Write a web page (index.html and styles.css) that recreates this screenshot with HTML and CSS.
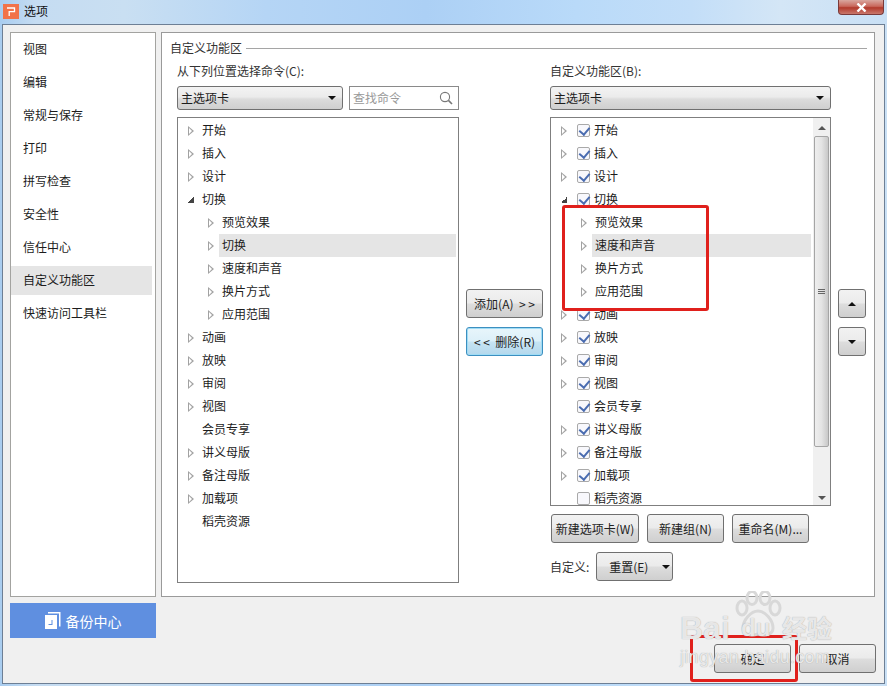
FILE: index.html
```html
<!DOCTYPE html>
<html lang="zh-CN">
<head>
<meta charset="utf-8">
<title>选项</title>
<link rel="stylesheet" href="styles.css">
</head>
<body>
<div class="window">
  <header class="titlebar">
    <svg class="app-icon" width="16" height="15" viewBox="0 0 16 15"><rect width="16" height="15" fill="#f2734a"/><path d="M4 4h7.5v3.6H6.2V12" fill="none" stroke="#fff" stroke-width="1.3"/></svg>
    <span class="title">选项</span>
    <span class="close"><svg width="11" height="9" viewBox="0 0 11 9"><path d="M1.5 0.5l8 8M9.5 0.5l-8 8" stroke="#fff" stroke-width="2.4"/></svg></span>
  </header>
  <div class="dialog">
    <nav class="sidebar">
      <div class="nav-item">视图</div>
      <div class="nav-item">编辑</div>
      <div class="nav-item">常规与保存</div>
      <div class="nav-item">打印</div>
      <div class="nav-item">拼写检查</div>
      <div class="nav-item">安全性</div>
      <div class="nav-item">信任中心</div>
      <div class="nav-item active">自定义功能区</div>
      <div class="nav-item">快速访问工具栏</div>
    </nav>
    <main class="panel">
      <div class="legend"><span>自定义功能区</span><i class="legend-line"></i></div>
      <div class="columns">
        <section class="col">
          <label class="col-label">从下列位置选择命令(C):</label>
          <div class="select-row">
            <div class="select grow"><span>主选项卡</span><i class="caret"></i></div>
            <div class="search"><span>查找命令</span>
              <svg width="14" height="14" viewBox="0 0 14 14"><circle cx="6" cy="6" r="4.6" fill="none" stroke="#777" stroke-width="1.1"/><path d="M9.4 9.4l3.6 3.6" stroke="#777" stroke-width="1.6"/></svg>
            </div>
          </div>
          <div class="tree tree-left">
            <div class="row"><i class="tri"></i><span>开始</span></div>
            <div class="row"><i class="tri"></i><span>插入</span></div>
            <div class="row"><i class="tri"></i><span>设计</span></div>
            <div class="row"><i class="tri open"></i><span>切换</span></div>
            <div class="row child"><i class="tri"></i><span>预览效果</span></div>
            <div class="row child selected"><i class="tri"></i><span>切换</span></div>
            <div class="row child"><i class="tri"></i><span>速度和声音</span></div>
            <div class="row child"><i class="tri"></i><span>换片方式</span></div>
            <div class="row child"><i class="tri"></i><span>应用范围</span></div>
            <div class="row"><i class="tri"></i><span>动画</span></div>
            <div class="row"><i class="tri"></i><span>放映</span></div>
            <div class="row"><i class="tri"></i><span>审阅</span></div>
            <div class="row"><i class="tri"></i><span>视图</span></div>
            <div class="row"><i class="tri none"></i><span>会员专享</span></div>
            <div class="row"><i class="tri"></i><span>讲义母版</span></div>
            <div class="row"><i class="tri"></i><span>备注母版</span></div>
            <div class="row"><i class="tri"></i><span>加载项</span></div>
            <div class="row"><i class="tri none"></i><span>稻壳资源</span></div>
          </div>
        </section>
        <section class="col-mid">
          <button class="btn">添加(A)&nbsp; &gt; &gt;</button>
          <button class="btn focus">&lt; &lt;&nbsp; 删除(R)</button>
        </section>
        <section class="col">
          <label class="col-label">自定义功能区(B):</label>
          <div class="select-row">
            <div class="select grow"><span>主选项卡</span><i class="caret"></i></div>
          </div>
          <div class="tree tree-right">
            <div class="tree-list">
              <div class="row"><i class="tri"></i><i class="chk on"></i><span>开始</span></div>
              <div class="row"><i class="tri"></i><i class="chk on"></i><span>插入</span></div>
              <div class="row"><i class="tri"></i><i class="chk on"></i><span>设计</span></div>
              <div class="row"><i class="tri open"></i><i class="chk on"></i><span>切换</span></div>
              <div class="row child"><i class="tri"></i><span>预览效果</span></div>
              <div class="row child selected"><i class="tri"></i><span>速度和声音</span></div>
              <div class="row child"><i class="tri"></i><span>换片方式</span></div>
              <div class="row child"><i class="tri"></i><span>应用范围</span></div>
              <div class="row"><i class="tri"></i><i class="chk on"></i><span>动画</span></div>
              <div class="row"><i class="tri"></i><i class="chk on"></i><span>放映</span></div>
              <div class="row"><i class="tri"></i><i class="chk on"></i><span>审阅</span></div>
              <div class="row"><i class="tri"></i><i class="chk on"></i><span>视图</span></div>
              <div class="row"><i class="tri none"></i><i class="chk on"></i><span>会员专享</span></div>
              <div class="row"><i class="tri"></i><i class="chk on"></i><span>讲义母版</span></div>
              <div class="row"><i class="tri"></i><i class="chk on"></i><span>备注母版</span></div>
              <div class="row"><i class="tri"></i><i class="chk on"></i><span>加载项</span></div>
              <div class="row"><i class="tri none"></i><i class="chk"></i><span>稻壳资源</span></div>
            </div>
            <div class="scrollbar">
              <i class="sb-arrow up"></i>
              <div class="sb-thumb"><b></b><b></b><b></b></div>
              <i class="sb-arrow down"></i>
            </div>
          </div>
          <div class="btn-row">
            <button class="btn wide">新建选项卡(W)</button>
            <button class="btn">新建组(N)</button>
            <button class="btn">重命名(M)...</button>
          </div>
          <div class="reset-row">
            <span class="reset-label">自定义:</span>
            <button class="btn split"><span>重置(E)</span><i class="caret"></i></button>
          </div>
        </section>
        <section class="col-move">
          <button class="btn square"><i class="caret up"></i></button>
          <button class="btn square"><i class="caret"></i></button>
        </section>
      </div>
    </main>
    <div class="backup">
      <svg width="16" height="17" viewBox="0 0 16 17"><path d="M3 0h12.5v14.5H14V1.5H3z" fill="#fff"/><path d="M0 3h12v14H0z" fill="#fff"/><path d="M7.5 8v5H3.5v-1h3V8z" fill="#5f8fe0"/></svg>
      <span>备份中心</span>
    </div>
    <footer class="footer">
      <button class="btn">确定</button>
      <button class="btn">取消</button>
    </footer>
  </div>

  <div class="mark mark-tree"></div>
  <div class="mark mark-ok"></div>

  <div class="watermark">
    <svg class="paw" width="50" height="46" viewBox="0 0 50 46"><g fill="none" stroke="#d8d8d8" stroke-width="3"><ellipse cx="9" cy="17" rx="5" ry="7"/><ellipse cx="19" cy="7" rx="5" ry="6.5"/><ellipse cx="32" cy="7" rx="5" ry="6.5"/><ellipse cx="42" cy="17" rx="5" ry="7"/><path d="M25 20c-7 0-15 9-15 17 0 7 8 8 15 6 7 2 15 1 15-6 0-8-8-17-15-17z"/></g></svg>
    <span class="wm-bai">Bai</span>
    <span class="wm-du">du</span>
    <span class="wm-jy">经验</span>
    <span class="wm-url">jingyan.baidu.com</span>
  </div>
</div>
</body>
</html>
```

FILE: styles.css
```css
* { box-sizing: border-box; }
html, body { margin: 0; padding: 0; }
body {
  width: 887px; height: 686px; overflow: hidden;
  font: 12px/14px "Noto Sans CJK SC", "Liberation Sans", sans-serif;
  color: #1c1c1c;
}
i { display: block; flex: none; }

.window {
  position: relative;
  width: 887px; height: 686px;
  display: flex; flex-direction: column;
  background: linear-gradient(90deg, #a9cdf0 0, #c5dcf2 4%, #c9dff2 14%, #b5d5f5 30%, #acd0f5 48%, #b9daf9 65%, #c3def8 78%, #d4e6f6 88%, #c9e0f5 100%);
}
.titlebar {
  height: 24px; flex: none;
  display: flex; align-items: center;
  padding: 0 3px 2px 3px;
  position: relative;
}
.app-icon { margin-top: 1px; }
.title { margin-left: 5px; color: #111; }
.close {
  position: absolute; right: 3px; top: 0;
  width: 46px; height: 15px;
  display: flex; align-items: center; justify-content: center;
  border: 1px solid #7a3a3a; border-top: 0;
  border-radius: 0 0 4px 4px;
  background: linear-gradient(#d9a79f 0, #c9685c 45%, #b23a2c 55%, #c9786c 100%);
}

.dialog {
  flex: none;
  width: 883px; height: 660px;
  margin-left: 2px;
  border: 1px solid #6d7f95;
  background: #f0f0f0;
  display: grid;
  grid-template-columns: 146px 714px;
  grid-template-rows: 565px 35px 29px;
  column-gap: 5px; row-gap: 6px;
  padding: 7px 8px 0 7px;
  align-content: start;
}

.sidebar {
  grid-row: 1; grid-column: 1;
  background: #fff;
  border: 1px solid #a3a3a0;
  padding-top: 2px;
}
.nav-item {
  height: 29px; margin: 0 3px 4px 0;
  padding-left: 12px;
  line-height: 27px;
}
.nav-item.active { background: #e5e5e5; }

.panel {
  grid-row: 1; grid-column: 2;
  background: #fff;
  border: 1px solid #9a9a9a;
  padding: 8px 7px 0 8px;
}
.legend { display: flex; align-items: center; gap: 4px; height: 14px; margin-bottom: 9px; color: #333; }
.legend-line { flex: 1; height: 1px; background: #a5a5a5; }

.columns { display: flex; gap: 7px; margin-left: 7px; align-items: flex-start; }
.col { width: 282px; flex: none; }
.col-mid + .col { width: 281px; }
.col-label { display: block; height: 14px; margin-bottom: 8px; color: #333; }
.select-row { display: flex; gap: 6px; height: 24px; margin-bottom: 7px; }
.grow { flex: 1; }
.select {
  display: flex; align-items: center; justify-content: space-between;
  padding: 0 6px 0 3px;
  border: 1px solid #707070; border-radius: 3px;
  background: linear-gradient(#f3f3f3 0, #ebebeb 45%, #dcdcdc 55%, #cfcfcf 100%);
}
.caret {
  width: 0; height: 0;
  border-left: 4px solid transparent; border-right: 4px solid transparent;
  border-top: 4px solid #111;
}
.caret.up { border-top: 0; border-bottom: 4px solid #111; }
.search {
  width: 110px; flex: none;
  display: flex; align-items: center; justify-content: space-between;
  padding: 0 5px 0 3px;
  border: 1px solid #8a8a8a;
  background: #fff; color: #999;
}

.tree { border: 1px solid #7f7f7f; background: #fff; overflow: hidden; }
.tree-left { height: 466px; padding: 1px 2px 0 0; }
.tree-right { height: 389px; display: flex; margin-bottom: 8px; }
.tree-list { flex: 1; padding: 1px 2px 0 0; min-width: 0; overflow: hidden; }

.row { height: 23px; display: flex; align-items: center; padding-left: 10px; }
.row > span { height: 23px; line-height: 21px; }
.row.child { padding-left: 30px; }
.row.selected > span { flex: 1; background: #e5e5e5; }

.tri {
  width: 0; height: 0;
  border-top: 5px solid transparent; border-bottom: 5px solid transparent;
  border-left: 6px solid #a2a2a2;
  position: relative;
}
.tri::after {
  content: ""; position: absolute; left: -5px; top: -3px;
  width: 0; height: 0;
  border-top: 3px solid transparent; border-bottom: 3px solid transparent;
  border-left: 3.5px solid #fff;
}
.tri.open {
  border: 0; width: 6px; height: 6px;
  background: linear-gradient(135deg, transparent 50%, #444 50%);
}
.tri.open::after { display: none; }
.tri.none { visibility: hidden; }

.tree-left .tri { margin-right: 8px; }
.tree-left .child .tri { margin-right: 3px; }
.tree-left .child > span { padding-left: 5px; }
.tree-left .child.selected > span { margin-left: 2px; padding-left: 3px; }

.tree-right .tri { margin-right: 10px; }
.tree-right .child .tri { margin-right: 5px; }
.tree-right .row > span { padding-left: 4px; }
.tree-right .child > span { padding-left: 3px; }

.chk {
  width: 13px; height: 13px;
  border: 1px solid #a9a9a9; border-radius: 2px;
  background: #f8f8fc;
  position: relative;
}
.chk.on::after {
  content: ""; position: absolute; left: 3px; top: 0;
  width: 5px; height: 8px;
  border: solid #4a6cb0; border-width: 0 2px 2px 0;
  transform: rotate(40deg);
}

.scrollbar {
  width: 17px; flex: none;
  background: #f0f0f0;
  display: flex; flex-direction: column; align-items: center;
}
.sb-arrow {
  width: 0; height: 0; flex: none;
  border-left: 4px solid transparent; border-right: 4px solid transparent;
}
.sb-arrow.up { border-bottom: 4px solid #555; margin: 8px 0 6px; }
.sb-arrow.down { border-top: 4px solid #555; margin: 49px 0 0; }
.sb-thumb {
  width: 15px; height: 311px; flex: none;
  border: 1px solid #a5a5a5; border-radius: 2px;
  background: linear-gradient(90deg, #eee 0, #e4e4e4 50%, #c8c8c8 100%);
  display: flex; flex-direction: column; align-items: center; justify-content: center; gap: 1px;
}
.sb-thumb b { display: block; width: 7px; height: 1px; background: #666; }

.btn {
  display: inline-flex; align-items: center; justify-content: center;
  width: 77px; height: 29px; padding: 0;
  font: inherit; color: #222;
  border: 1px solid #707070; border-radius: 3px;
  background: linear-gradient(#f2f2f2 0, #ebebeb 48%, #dddddd 52%, #cfcfcf 100%);
}
.btn.focus {
  border-color: #3c8fc0;
  background: linear-gradient(#e8f5fb 0, #dcf0f9 48%, #c6e4f3 52%, #b4d8ec 100%);
  box-shadow: inset 0 0 0 1px #9fdcf5;
}
.col-mid { width: 77px; flex: none; display: flex; flex-direction: column; gap: 9px; padding-top: 225px; }
.col-move { width: 28px; flex: none; display: flex; flex-direction: column; gap: 9px; padding-top: 225px; }
.btn.square { width: 28px; }
.btn-row { display: flex; gap: 8px; margin-left: 1px; margin-bottom: 9px; }
.btn.wide { width: 88px; }
.reset-row { display: flex; align-items: center; gap: 7px; }
.reset-label { color: #333; }
.btn.split { gap: 14px; padding-left: 10px; }

.backup {
  grid-row: 2; grid-column: 1;
  background: #5f8fe0; color: #fff;
  display: flex; align-items: center; justify-content: center; gap: 5px;
  font-size: 14px;
}
.footer {
  grid-row: 3; grid-column: 1 / span 2;
  margin-right: -1px;
  display: flex; justify-content: flex-end; gap: 8px;
}

.mark { position: absolute; border: 3px solid #e0201c; border-radius: 3px; pointer-events: none; }
.mark-tree { left: 562px; top: 205px; width: 147px; height: 106px; }
.mark-ok { left: 690px; top: 635px; width: 108px; height: 47px; }

.watermark { position: absolute; left: 680px; top: 588px; width: 170px; height: 90px; pointer-events: none; }
.paw { position: absolute; left: 53px; top: 3px; }
.watermark span { position: absolute; color: rgba(242,242,242,.9); font-family: "Liberation Sans", sans-serif; font-weight: 700; text-shadow: 0 0 1px #999; }
.wm-bai { left: 0; top: 22px; font-size: 32px; line-height: 36px; }
.wm-du { left: 61px; top: 26px; font-size: 24px; line-height: 28px; }
.watermark .wm-jy { left: 102px; top: 24px; font-size: 25px; line-height: 30px; font-family: "Noto Sans CJK SC", sans-serif; }
.watermark .wm-url { left: 0; top: 58px; font-size: 18px; line-height: 22px; font-weight: 400; letter-spacing: .3px; }
```
